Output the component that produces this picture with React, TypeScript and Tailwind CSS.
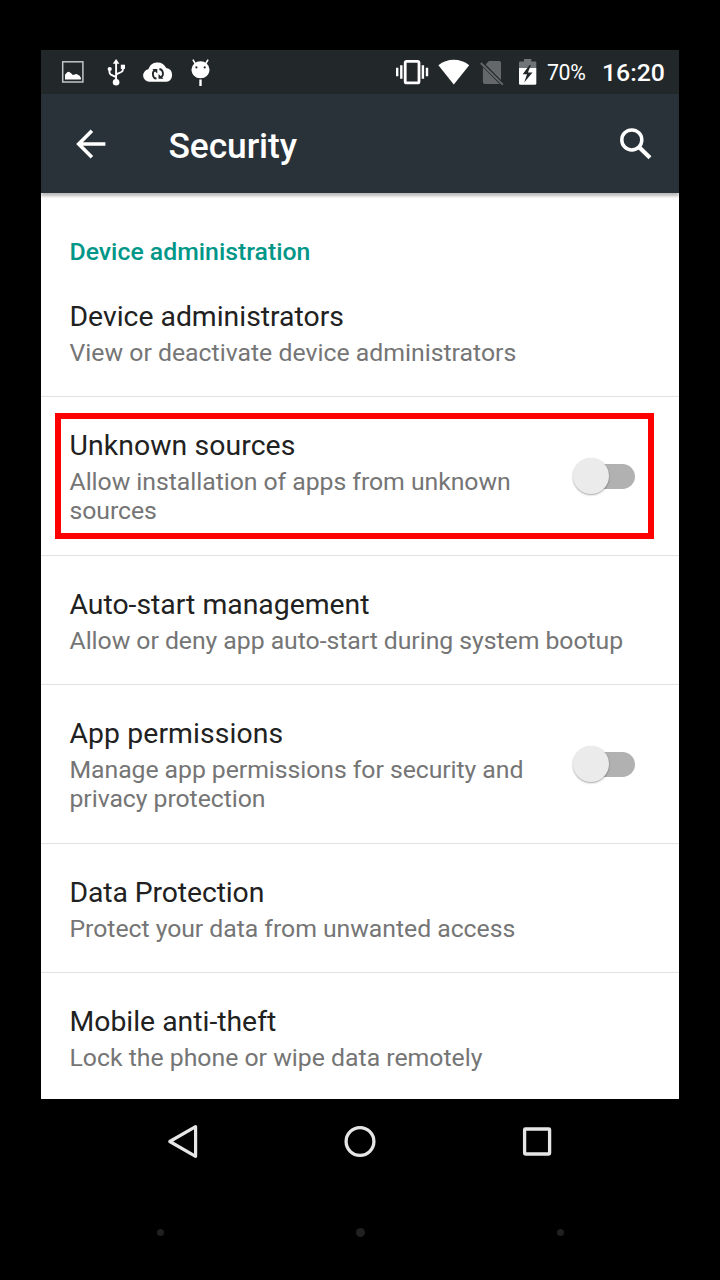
import type { ReactNode } from "react";

function Glyph({ x, w, className = "", children }: { x: number; w: number; className?: string; children: ReactNode }) {
  return (
    <svg width={w} height={32} viewBox={`${x} 56 ${w} 32`} className={`shrink-0 ${className}`} fill="none">
      {children}
    </svg>
  );
}

function StatusBar() {
  return (
    <div className="flex h-[44px] shrink-0 items-center bg-[#22272a] pl-[19px] text-white">
      <Glyph x={60} w={26}>
        <rect x="62.7" y="61.8" width="20.2" height="20.2" stroke="#c3c6c7" strokeWidth="1.5" />
        <path d="M65 79.5v-4.8l2.2-2.4 1.6-.6 2 1.4 2 1.8 3.8-1 3 1.8 1.3 2v1.8z" fill="#fff" />
      </Glyph>
      <Glyph x={105} w={22} className="ml-[19px]">
        <circle cx="116.1" cy="82.3" r="3.3" fill="#fff" />
        <path d="M112.8 63.8 116.1 59l3.3 4.8z" fill="#fff" />
        <path d="M116.1 82V62M116.1 77.2l-5.2-2.6q-1.4-.8-1.4-2.3v-3.5M116.1 74.4l5.2-2.4q1.6-.8 1.6-2.4v-3" stroke="#fff" strokeWidth="1.9" />
        <circle cx="109.7" cy="69" r="2.1" fill="#fff" />
        <rect x="120.8" y="64.7" width="4.2" height="4.2" fill="#fff" />
      </Glyph>
      <Glyph x={141} w={34} className="ml-[14px]">
        <path d="M149.3 81.8a6.3 6.3 0 0 1-1-12.5 9.6 9.6 0 0 1 17.9-1.2 7 7 0 0 1 .6 13.7z" fill="#fff" />
        <path d="M156.5 78.7c-4.4-.8-4.7-6.8-1.5-8.6M159.4 69c4.3.8 4.6 6.8 1.5 8.6" stroke="#22272a" strokeWidth="1.8" />
        <path d="M152.3 69h5v4.6zM163.5 78.7h-5v-4.6z" fill="#22272a" />
      </Glyph>
      <Glyph x={189} w={24} className="ml-[14px]">
        <path d="M191.5 69.5a9 8.2 0 0 1 18 0c0 5-3.8 8.8-9 8.8s-9-3.8-9-8.8z" fill="#fff" />
        <path d="m195.5 64-2.6-4.4M205.5 64l2.6-4.4" stroke="#fff" strokeWidth="1.6" />
        <path d="M200.5 79.5V86" stroke="#fff" strokeWidth="2.4" />
        <circle cx="196.4" cy="67.4" r="1.1" fill="#22272a" />
        <circle cx="204.7" cy="67.4" r="1.1" fill="#22272a" />
      </Glyph>

      <Glyph x={394} w={36} className="ml-[181px]">
        <rect x="405.2" y="61.3" width="13.8" height="21.6" rx="1.5" stroke="#fff" strokeWidth="2.8" />
        <path d="M397.2 67.7v8.6M401.3 65.2v13.6M422.9 65.2v13.6M427 67.7v8.6" stroke="#fff" strokeWidth="2.4" />
      </Glyph>
      <Glyph x={437} w={34} className="ml-[7px]">
        <path d="M453.8 84.6 438.4 65.2c8.6-7.4 22.2-7.4 30.8 0z" fill="#fff" />
      </Glyph>
      <Glyph x={479} w={26} className="ml-[8px]">
        <path d="M489 61h10.2q1.8 0 1.8 1.8v17.2L485.6 64.6zM482.9 67.2 499.6 84h-14.9q-1.8 0-1.8-1.8z" fill="#64686a" />
        <path d="m480.8 63 22 21.6" stroke="#64686a" strokeWidth="2" />
      </Glyph>
      <Glyph x={517} w={22} className="ml-[12px]">
        <path d="M519 68v-5.5q0-1 1-1h4V59h7.3v2.5h4q1 0 1 1V68z" fill="#717577" />
        <path d="M519 68h17.3v15.4q0 1.4-1.4 1.4h-14.5q-1.4 0-1.4-1.4z" fill="#fff" />
        <path d="m529.5 65-6.8 9.2h4.3l-2.8 8.4 8.3-10h-4.6l3-7.6z" fill="#22272a" />
      </Glyph>
      <span className="ml-[8px] w-[40px] pt-[2px] text-[21.3px] leading-none tracking-[-0.4px]">70%</span>
      <span className="ml-[15px] pt-[3px] text-[24.8px] leading-none font-medium">16:20</span>
    </div>
  );
}

function AppBar() {
  return (
    <header className="z-10 flex h-[99px] shrink-0 items-center bg-[#283238] pl-[34px] text-white shadow-[0_3px_3px_0_rgba(0,0,0,0.28)]">
      <svg width="32" height="34" viewBox="74.6 127 32 34" fill="none">
        <path d="M105 144H79M91.5 130.8 78.3 144l13.2 13.2" stroke="#fff" strokeWidth="3.6" />
      </svg>
      <h1 className="ml-[61.5px] pt-[4px] text-[35.4px] leading-[42px] font-medium tracking-[-0.1px]">Security</h1>
      <svg width="36" height="36" viewBox="618 125.5 36 36" fill="none" className="ml-auto mr-[25px]">
        <circle cx="631.8" cy="139.4" r="10" stroke="#fff" strokeWidth="3.5" />
        <path d="m639.2 146.8 10.8 10.4" stroke="#fff" strokeWidth="4.2" />
      </svg>
    </header>
  );
}

function Toggle() {
  return (
    <button role="switch" aria-checked="false" className="flex h-[36px] w-[62px] shrink-0 items-center rounded-full">
      <span className="relative z-10 h-[36px] w-[36px] shrink-0 rounded-full bg-[#ebebeb] shadow-[0_1px_2px_rgba(0,0,0,0.35)]" />
      <span className="-ml-[18px] h-[25px] w-[44px] rounded-r-full bg-[#b1b1b1]" />
    </button>
  );
}

type RowProps = {
  title: string;
  summary: string;
  toggle?: boolean;
  marked?: boolean;
  titleClass?: string;
  summaryClass?: string;
};

function Row({ title, summary, toggle = false, marked = false, titleClass = "", summaryClass = "" }: RowProps) {
  return (
    <div className={`relative flex items-start border-b border-[#e2e2e2] pr-[44px] pl-[28.5px] ${toggle ? "h-[159px]" : "h-[129px]"}`}>
      <div className={`pt-[32px] ${toggle ? "w-[480px]" : "w-full"}`}>
        <div className={`text-[28.35px] leading-[34px] text-[#212121] ${titleClass}`}>{title}</div>
        <div className={`mt-[4px] text-[24.8px] leading-[29.4px] text-[#757575] ${summaryClass}`}>{summary}</div>
      </div>
      {toggle && (
        <div className="ml-auto pt-[61px]">
          <Toggle />
        </div>
      )}
      {marked && <div className="absolute top-[16px] left-[14px] h-[126px] w-[599px] border-[6px] border-[#ff0000]" />}
    </div>
  );
}

function NavBar() {
  return (
    <nav className="flex h-[84px] items-center justify-between px-[125px]">
      <svg width="34" height="36" viewBox="166 1123 34 36" fill="none">
        <path d="M169.8 1141.5 195.6 1126.7V1156.3z" stroke="#e6e6e6" strokeWidth="3.2" strokeLinejoin="round" />
      </svg>
      <svg width="34" height="36" viewBox="343 1123 34 36" fill="none">
        <circle cx="360" cy="1141.5" r="13.9" stroke="#e6e6e6" strokeWidth="3.3" />
      </svg>
      <svg width="34" height="36" viewBox="520 1123 34 36" fill="none">
        <rect x="524.6" y="1129" width="25" height="25" rx="0.8" stroke="#e6e6e6" strokeWidth="3.3" />
      </svg>
    </nav>
  );
}

export default function App() {
  return (
    <div className="flex h-[1280px] w-[720px] flex-col bg-black pt-[50px] font-[Roboto,sans-serif]">
      <div className="mx-[41px] flex h-[1049px] flex-col overflow-hidden bg-white">
        <StatusBar />
        <AppBar />
        <h2 className="h-[75px] shrink-0 pt-[44px] pl-[28.5px] text-[24.8px] leading-[30px] font-medium text-[#009688]">
          Device administration
        </h2>
        <main className="h-[837px] shrink-0">
          <Row title="Device administrators" summary="View or deactivate device administrators" />
          <Row
            title="Unknown sources"
            summary="Allow installation of apps from unknown sources"
            titleClass="tracking-[0.1px]"
            summaryClass="tracking-[-0.05px]"
            toggle
            marked
          />
          <Row
            title="Auto-start management"
            summary="Allow or deny app auto-start during system bootup"
            summaryClass="tracking-[-0.05px]"
          />
          <Row
            title="App permissions"
            summary="Manage app permissions for security and privacy protection"
            titleClass="tracking-[0.1px]"
            summaryClass="tracking-[-0.06px]"
            toggle
          />
          <Row
            title="Data Protection"
            summary="Protect your data from unwanted access"
            titleClass="tracking-[-0.1px]"
            summaryClass="tracking-[-0.04px]"
          />
          <Row title="Mobile anti-theft" summary="Lock the phone or wipe data remotely" />
        </main>
      </div>
      <div className="mx-[41px]">
        <NavBar />
      </div>
      <div className="mt-[44px] flex h-[11px] items-center justify-between pr-[156px] pl-[157px]">
        <span className="h-[7px] w-[7px] rounded-full bg-[#202020]" />
        <span className="h-[9px] w-[9px] rounded-full bg-[#202020]" />
        <span className="h-[7px] w-[7px] rounded-full bg-[#202020]" />
      </div>
    </div>
  );
}
